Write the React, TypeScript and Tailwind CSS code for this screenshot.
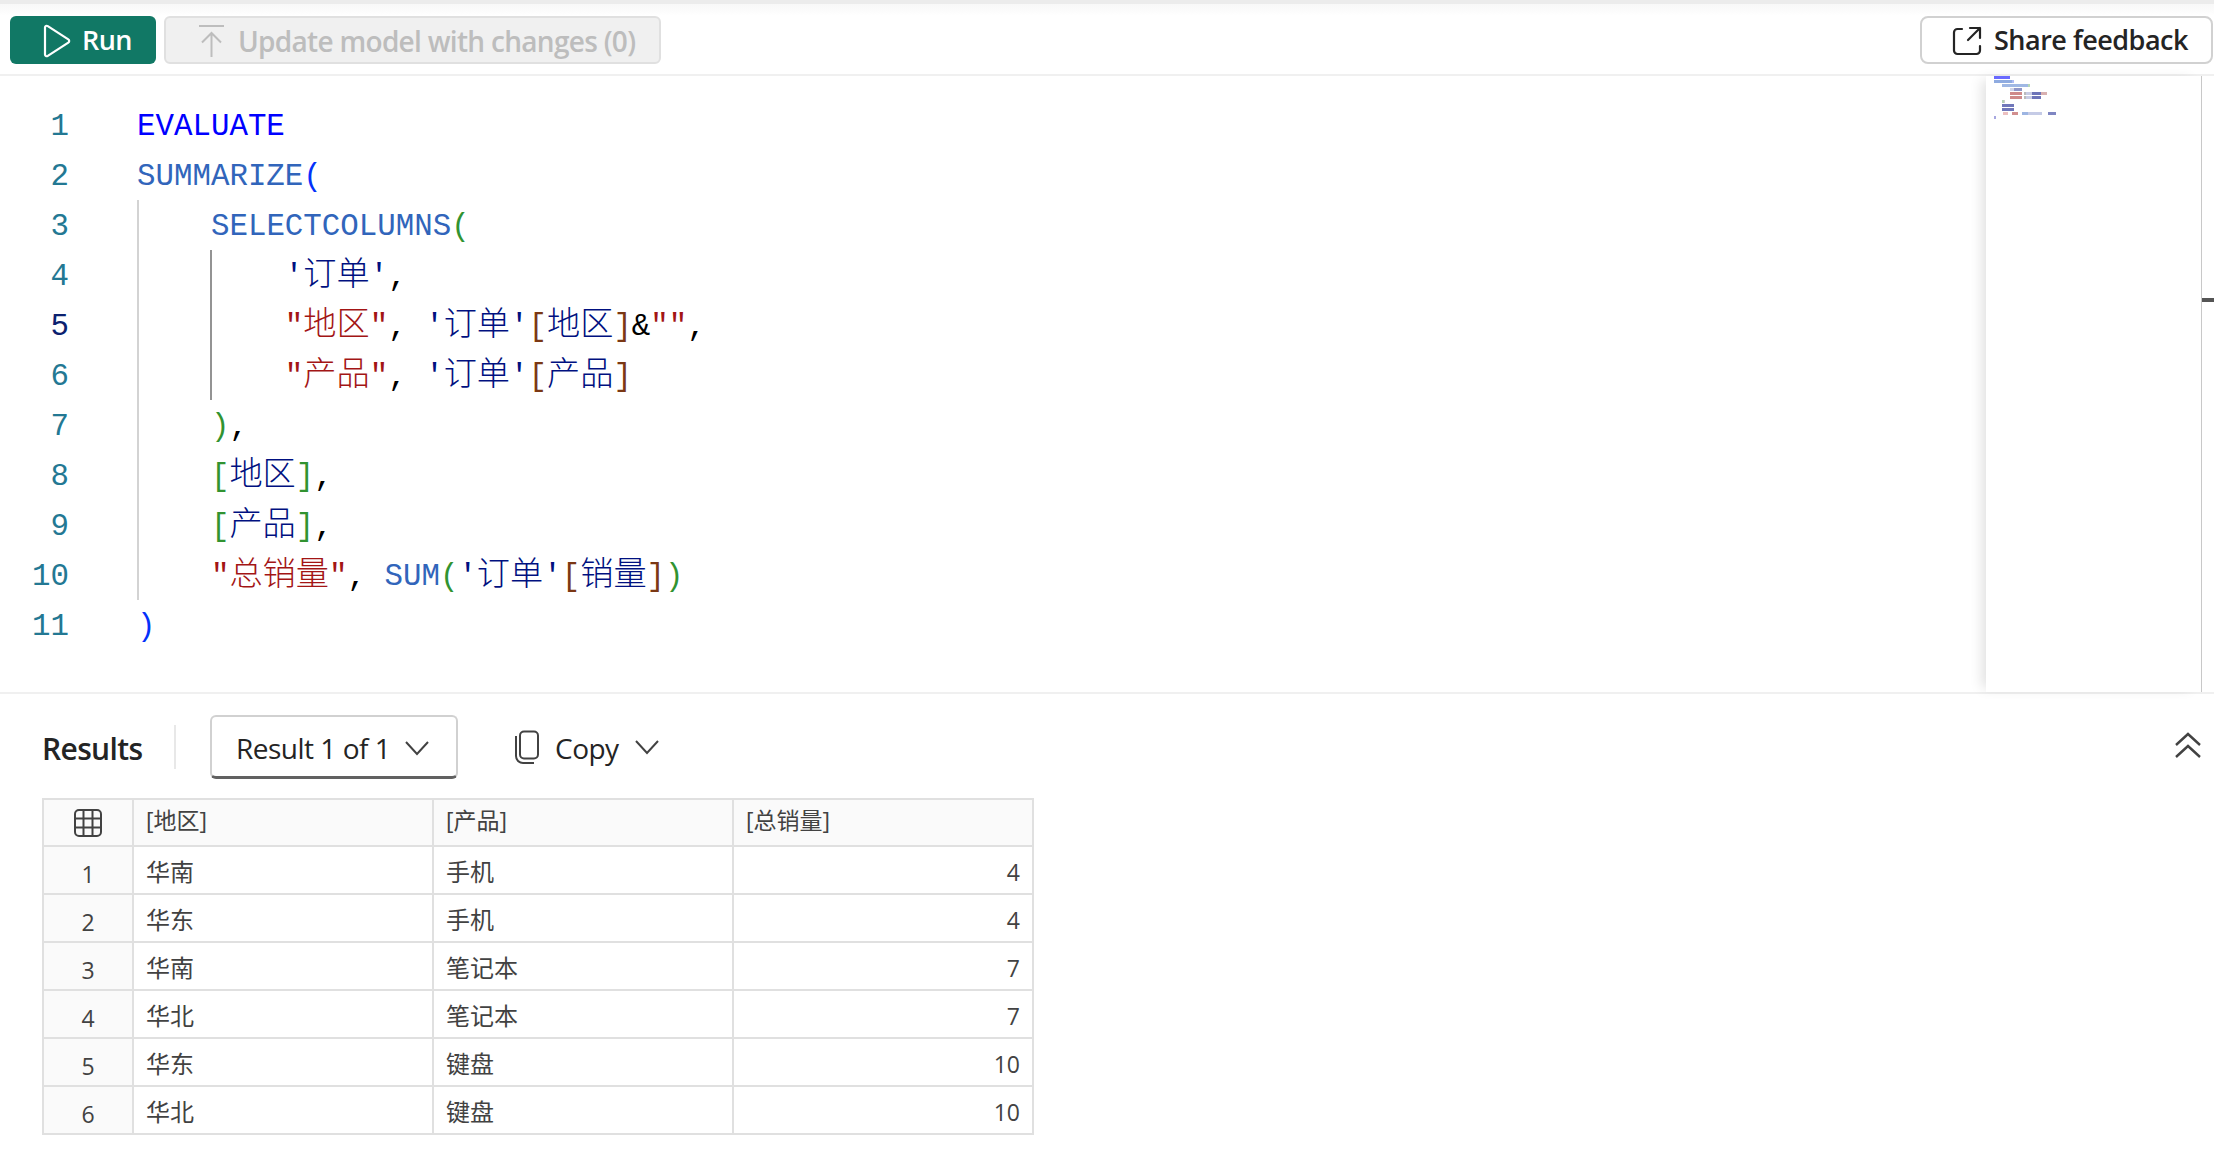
import React from "react";

const ui = "font-['Open_Sans','Noto_Sans_CJK_SC',sans-serif]";
const C = {
  kw: "text-[#0000ff]",
  fn: "text-[#3165bb]",
  blue: "text-[#0431fa]",
  green: "text-[#319331]",
  str: "text-[#a31515]",
  tbl: "text-[#001080]",
  br: "text-[#7b3814]",
  blk: "text-[#000000]",
};
type Tok = [string, string];
const code: Tok[][] = [
  [[C.kw, "EVALUATE"]],
  [[C.fn, "SUMMARIZE"], [C.blue, "("]],
  [[C.blk, "    "], [C.fn, "SELECTCOLUMNS"], [C.green, "("]],
  [[C.blk, "        "], [C.tbl, "'订单'"], [C.blk, ","]],
  [[C.blk, "        "], [C.str, "\"地区\""], [C.blk, ", "], [C.tbl, "'订单'"], [C.br, "["], [C.tbl, "地区"], [C.br, "]"], [C.blk, "&"], [C.str, "\"\""], [C.blk, ","]],
  [[C.blk, "        "], [C.str, "\"产品\""], [C.blk, ", "], [C.tbl, "'订单'"], [C.br, "["], [C.tbl, "产品"], [C.br, "]"]],
  [[C.blk, "    "], [C.green, ")"], [C.blk, ","]],
  [[C.blk, "    "], [C.green, "["], [C.tbl, "地区"], [C.green, "]"], [C.blk, ","]],
  [[C.blk, "    "], [C.green, "["], [C.tbl, "产品"], [C.green, "]"], [C.blk, ","]],
  [[C.blk, "    "], [C.str, "\"总销量\""], [C.blk, ", "], [C.fn, "SUM"], [C.green, "("], [C.tbl, "'订单'"], [C.br, "["], [C.tbl, "销量"], [C.br, "]"], [C.green, ")"]],
  [[C.blue, ")"]],
];

const rows = [
  ["华南", "手机", "4"],
  ["华东", "手机", "4"],
  ["华南", "笔记本", "7"],
  ["华北", "笔记本", "7"],
  ["华东", "键盘", "10"],
  ["华北", "键盘", "10"],
];

const Chevron = () => (
  <svg width="26" height="16" viewBox="0 0 26 16" fill="none" stroke="#424242" strokeWidth="2">
    <path d="M2 2l11 12L24 2" />
  </svg>
);

const mini: [number, number, number, string][] = [
  [0, 0, 16, "#6a6aff"], [0, 4, 18, "#8fabe0"], [18, 4, 2, "#b0bcf5"],
  [8, 8, 26, "#a0b8e4"], [34, 8, 2, "#b5d8b5"],
  [16, 12, 4, "#d0d4e8"], [20, 12, 8, "#8f96c8"],
  [16, 16, 12, "#cf8a8a"], [30, 16, 2, "#bbbbbb"], [32, 16, 6, "#c8cce4"], [38, 16, 9, "#6d74b8"], [47, 16, 6, "#d8b0b0"],
  [16, 20, 12, "#cf8a8a"], [30, 20, 2, "#bbbbbb"], [32, 20, 6, "#c8cce4"], [38, 20, 9, "#6d74b8"],
  [8, 24, 2, "#b5d0b5"], [10, 24, 1, "#cccccc"],
  [8, 28, 12, "#7077ba"],
  [8, 32, 12, "#7077ba"],
  [9, 36, 5, "#ecc0c0"], [18, 36, 6, "#d28f8f"], [28, 36, 6, "#9db5e2"], [34, 36, 14, "#c5cbe6"], [54, 36, 8, "#7f86c2"],
  [0, 40, 2, "#a8a8e0"],
];

export default function App() {
  return (
    <div className={`${ui} w-[2214px] h-[1160px] bg-white flex flex-col overflow-hidden text-[#242424]`}>
      <div className="h-[4px] bg-[#ececec] shrink-0" />
      <div className="h-[72px] shrink-0 flex items-start justify-between pt-[12px] pl-[10px] border-b-2 border-[#f0f0f0] bg-gradient-to-b from-[#f8f8f8] to-white to-[12px]">
        <div className="flex gap-[8px]">
          <div className="w-[146px] h-[48px] rounded-[6px] bg-[#117865] text-white flex items-center pl-[32px] gap-[10px] pt-[1px] text-[27px] font-semibold tracking-[-0.6px]">
            <svg width="30" height="34" viewBox="0 0 30 34" fill="none" stroke="#fff" strokeWidth="2.2" strokeLinejoin="round">
              <path d="M3 3.500c0-1.500 1.500-2.200 2.800-1.400l20.500 13.300c1.200.8 1.200 2.400 0 3.200L5.800 31.900C4.500 32.700 3 32 3 30.500z" />
            </svg>
            <span>Run</span>
          </div>
          <div className="w-[497px] h-[48px] rounded-[6px] bg-[#f0f0f0] border-2 border-[#e0e0e0] text-[#bdbdbd] flex items-center pl-[32px] gap-[12px] pt-[1px] text-[28px] font-semibold tracking-[-0.7px]">
            <svg width="28" height="34" viewBox="0 0 28 34" fill="none" stroke="#bdbdbd" strokeWidth="2">
              <path d="M1 2h25M13.500 33V9M4 18.500l9.500-9.500 9.500 9.500" />
            </svg>
            <span>Update model with changes (0)</span>
          </div>
        </div>
        <div className="mr-[1px] w-[293px] h-[48px] rounded-[8px] border-2 border-[#d1d1d1] flex items-center pl-[30px] gap-[12px] pt-[1px] text-[27px] font-semibold tracking-[-0.5px]">
          <svg width="30" height="30" viewBox="0 0 30 30" fill="none" stroke="#242424" strokeWidth="2.2" strokeLinecap="round" strokeLinejoin="round">
            <path d="M10 3H5.500A3.500 3.500 0 0 0 2 6.500v18A3.500 3.500 0 0 0 5.500 28h19a3.500 3.500 0 0 0 3.500-3.500V20" />
            <path d="M18 2h10v10M28 2L16 14" />
          </svg>
          <span>Share feedback</span>
        </div>
      </div>

      <div className="h-[618px] shrink-0 flex border-b-2 border-[#f0f0f0]">
        <div className="flex-1 flex pt-[24px] font-['Liberation_Mono','Noto_Sans_CJK_SC',monospace] text-[30.8px]">
          <div className="w-[137px] shrink-0 pr-[68px] text-right">
            {code.map((_, i) => (
              <div key={i} className={`h-[50px] leading-[53px] ${i === 4 ? "text-[#0b216f]" : "text-[#237893]"}`}>{i + 1}</div>
            ))}
          </div>
          <div className="relative flex-1">
            <div className="absolute left-0 top-[100px] w-[2px] h-[400px] bg-[#d3d3d3]" />
            <div className="absolute left-[73px] top-[150px] w-[2px] h-[150px] bg-[#939393]" />
            {code.map((line, i) => (
              <div key={i} className="h-[50px] leading-[53px] whitespace-pre">
                {line.map(([c, t], j) => (
                  <span key={j} className={c}>
                    {t.split(/([\u4e00-\u9fff]+)/).map((p, k) =>
                      /[\u4e00-\u9fff]/.test(p) ? (
                        <span key={k} className="text-[33.200px] leading-none font-['Noto_Sans_CJK_SC',sans-serif] font-light">{p}</span>
                      ) : (
                        p
                      )
                    )}
                  </span>
                ))}
              </div>
            ))}
          </div>
        </div>
        <div className="w-[216px] shrink-0 bg-white shadow-[-8px_0_12px_-4px_rgba(0,0,0,0.12)] border-r border-[#c8c8c8]">
          <svg width="216" height="50" viewBox="0 0 216 50">
            {mini.map(([x, y, w, f], i) => (
              <rect key={i} x={8 + x} y={y} width={w} height="3" fill={f} />
            ))}
          </svg>
        </div>
        <div className="w-[12px] shrink-0 bg-white pt-[222px]">
          <div className="h-[4px] bg-[#555555]" />
        </div>
      </div>

      <div className="relative flex-1 pl-[42px]">
        <div className="flex items-center h-[88px] pt-[18px]">
          <span className="text-[30px] font-semibold tracking-[-0.65px] w-[134px] border-r-2 border-[#e8e8e8] h-[44px] leading-[48px]">Results</span>
          <div className="ml-[34px] w-[248px] h-[64px] rounded-[6px] border-2 border-[#d1d1d1] border-b-[3px] border-b-[#616161] flex items-center pl-[24px] gap-[14px] pt-[2px] text-[28px] tracking-[-0.5px]">
            <span>Result 1 of 1</span>
            <Chevron />
          </div>
          <div className="ml-[56px] flex items-center text-[28px] tracking-[-0.5px]">
            <svg width="26" height="34" viewBox="0 0 26 34" fill="none" stroke="#424242" strokeWidth="2">
              <rect x="6" y="1.500" width="18" height="27" rx="4" />
              <path d="M2 6v20a7 7 0 0 0 7 7h11" />
            </svg>
            <span className="ml-[15px] mr-[15px] pt-[2px] font-medium">Copy</span>
            <Chevron />
          </div>
        </div>
        <svg className="absolute left-[2174px] top-[38px]" width="28" height="26" viewBox="0 0 28 26" fill="none" stroke="#424242" strokeWidth="2.4">
          <path d="M2 13L14 2l12 11M2 25l12-11 12 11" />
        </svg>

        <table className="mt-[16px] w-[990px] table-fixed border-collapse text-[24px] text-[#424242]">
          <colgroup>
            <col className="w-[90px]" />
            <col className="w-[300px]" />
            <col className="w-[300px]" />
            <col className="w-[300px]" />
          </colgroup>
          <thead>
            <tr className="h-[47px] bg-[#fafafa]">
              <th className="border-2 border-[#e0e0e0] font-normal p-0">
                <svg className="mx-auto" width="28" height="28" viewBox="0 0 28 28" fill="none" stroke="#424242" strokeWidth="2">
                  <rect x="1" y="1" width="26" height="26" rx="4" />
                  <path d="M1 9.500h26M1 18.500h26M9.500 1v26M18.500 1v26" />
                </svg>
              </th>
              {["[地区]", "[产品]", "[总销量]"].map((h) => (
                <th key={h} className="border-2 border-[#e0e0e0] font-normal text-left pl-[12px] pb-[4px] text-[23px]">{h}</th>
              ))}
            </tr>
          </thead>
          <tbody>
            {rows.map((r, i) => (
              <tr key={i} className="h-[48px]">
                <td className="border-2 border-[#e0e0e0] bg-[#fafafa] text-center p-0 pt-[8px] text-[23px]">{i + 1}</td>
                <td className="border-2 border-[#e0e0e0] pl-[12px] pt-[4px]">{r[0]}</td>
                <td className="border-2 border-[#e0e0e0] pl-[12px] pt-[4px]">{r[1]}</td>
                <td className="border-2 border-[#e0e0e0] text-right pr-[12px] pt-[4px] text-[23px]">{r[2]}</td>
              </tr>
            ))}
          </tbody>
        </table>
      </div>
    </div>
  );
}
